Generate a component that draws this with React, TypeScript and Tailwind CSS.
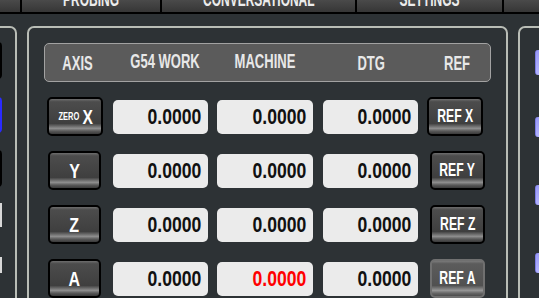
import React from "react";

const btnBase =
  "flex items-center justify-center rounded-[5px] border-2 text-white bg-[linear-gradient(to_bottom,#6e6e6e_0%,#4c4c4c_8%,#3f3f3f_70%,#8e8e8e_84%,#575757_92%,#3a3a3a_100%)]";
const btnDim =
  "flex items-center justify-center rounded-[5px] border-2 text-white bg-[linear-gradient(to_bottom,#7a7a7a_0%,#5c5c5c_8%,#515151_70%,#969696_84%,#666666_92%,#4c4c4c_100%)]";

function Val({ v, red }: { v: string; red?: boolean }) {
  return (
    <div className="h-[34px] rounded-[5px] bg-[#ebebeb] flex items-center justify-end pr-[7px]">
      <span
        className={
          "inline-block whitespace-nowrap text-[22px] font-bold leading-none origin-right scale-x-[0.8] " +
          (red ? "text-[#ff0000]" : "text-[#111111]")
        }
      >
        {v}
      </span>
    </div>
  );
}

function Head({ children }: { children: React.ReactNode }) {
  return (
    <span className="inline-block whitespace-nowrap text-[21px] font-bold leading-none scale-x-[0.62]">
      {children}
    </span>
  );
}

function RefLabel({ children }: { children: React.ReactNode }) {
  return (
    <span className="inline-block whitespace-nowrap text-[18.5px] font-bold leading-none scale-x-[0.66]">
      {children}
    </span>
  );
}

type Row = { axis: string; machineRed?: boolean; zero?: boolean; dimRef?: boolean };
const rows: Row[] = [
  { axis: "X", zero: true },
  { axis: "Y" },
  { axis: "Z" },
  { axis: "A", machineRed: true, dimRef: true },
];

const lav =
  "w-[30px] rounded-l-[3px] border-l border-[#7d7de6] bg-[linear-gradient(to_bottom,#9a9af5,#b4b4ff)]";

export default function App() {
  return (
    <div className="w-[539px] h-[298px] overflow-hidden bg-[#2d3235] [font-family:'Liberation_Sans',Arial,sans-serif]">
      {/* tab bar */}
      <div className="flex h-[14px] border-b-2 border-black text-[#ececec]">
        {[
          { w: "w-[20px]", t: "" },
          { w: "w-[138px]", t: "PROBING" },
          { w: "w-[193px]", t: "CONVERSATIONAL" },
          { w: "w-[145px]", t: "SETTINGS" },
          { w: "flex-1", t: "" },
        ].map((tab, i) => (
          <React.Fragment key={i}>
            {i > 0 && <div className="w-[2px] bg-black" />}
            <div
              className={
                tab.w +
                " overflow-hidden flex items-end justify-center pb-[3px] bg-[linear-gradient(to_bottom,#4a4a4a,#363636)]"
              }
            >
              {tab.t && (
                <span className="inline-block text-[21px] font-bold leading-none scale-x-[0.57] whitespace-nowrap">
                  {tab.t}
                </span>
              )}
            </div>
          </React.Fragment>
        ))}
      </div>

      {/* panels */}
      <div className="flex gap-[10px] mt-[12px]">
        {/* left panel */}
        <div className="ml-[-23px] w-[40px] h-[300px] shrink-0 rounded-[7px] border-2 border-[#b9bdb6] flex flex-col items-end pr-[13px]">
          <div className="mt-[14px] w-[20px] h-[37px] rounded-[4px] border-2 border-black" />
          <div className="mt-[18px] w-[20px] h-[36px] rounded-[4px] border-2 border-[#2a2aff]" />
          <div className="mt-[17px] w-[20px] h-[37px] rounded-[4px] border-2 border-black" />
          <div className="mt-[16px] w-[20px] h-[24px] border-r-2 border-[#d8d8d8]" />
          <div className="mt-[30px] w-[20px] h-[16px] border-r-2 border-[#d8d8d8]" />
        </div>

        {/* main panel */}
        <div className="w-[481px] h-[300px] shrink-0 rounded-[7px] border-2 border-[#b9bdb6] pt-[15px] px-[15px]">
          <div className="h-[39px] rounded-[5px] border border-[#a2a2a2] bg-[#5b5b5b] text-[#e8e8e8] grid grid-cols-[59px_95px_105px_105px_58px] gap-x-[4px] items-center justify-items-center pl-[3px]">
            <Head>AXIS</Head>
            <span className="pl-[12px]"><Head>G54 WORK</Head></span>
            <span className="pl-[4px]"><Head>MACHINE</Head></span>
            <Head>DTG</Head>
            <Head>REF</Head>
          </div>

          <div className="flex flex-col gap-[15px] mt-[15px] pl-[3px]">
            {rows.map((r) => (
              <div key={r.axis} className="flex items-center h-[39px]">
                <div className="w-[56px] shrink-0 flex">
                  {r.zero ? (
                    <div className={btnBase + " w-[56px] h-[39px] border-black gap-[4px] pl-[1px]"}>
                      <span className="w-[21px] flex justify-center pt-[1px]">
                        <span className="inline-block text-[10px] font-bold leading-none scale-x-[0.75]">ZERO</span>
                      </span>
                      <span className="w-[10px] flex justify-center">
                        <span className="inline-block text-[20px] font-bold leading-none scale-x-[0.78]">X</span>
                      </span>
                    </div>
                  ) : (
                    <div className={btnBase + " ml-[1px] w-[53px] h-[39px] border-black"}>
                      <span className="inline-block text-[20px] font-bold leading-none scale-x-[0.8]">{r.axis}</span>
                    </div>
                  )}
                </div>
                <div className="w-[95px] ml-[10px]">
                  <Val v="0.0000" />
                </div>
                <div className="w-[96px] ml-[9px]">
                  <Val v="0.0000" red={r.machineRed} />
                </div>
                <div className="w-[95px] ml-[10px]">
                  <Val v="0.0000" />
                </div>
                <div className="ml-[9px] w-[58px] flex">
                  {r.zero ? (
                    <div className={btnBase + " w-[56px] h-[39px] border-black"}>
                      <RefLabel>REF {r.axis}</RefLabel>
                    </div>
                  ) : (
                    <div
                      className={
                        (r.dimRef ? btnDim + " border-[#707070]" : btnBase + " border-black") +
                        " ml-[3px] w-[55px] h-[39px]"
                      }
                    >
                      <RefLabel>REF {r.axis}</RefLabel>
                    </div>
                  )}
                </div>
              </div>
            ))}
          </div>
        </div>

        {/* right panel */}
        <div className="w-[40px] h-[300px] shrink-0 rounded-[7px] border-2 border-[#b9bdb6] flex flex-col pl-[15px]">
          <div className={lav + " mt-[22px] h-[25px]"} />
          <div className={lav + " mt-[42px] h-[20px]"} />
          <div className={lav + " mt-[48px] h-[20px]"} />
          <div className={lav + " mt-[48px] h-[20px]"} />
        </div>
      </div>
    </div>
  );
}
